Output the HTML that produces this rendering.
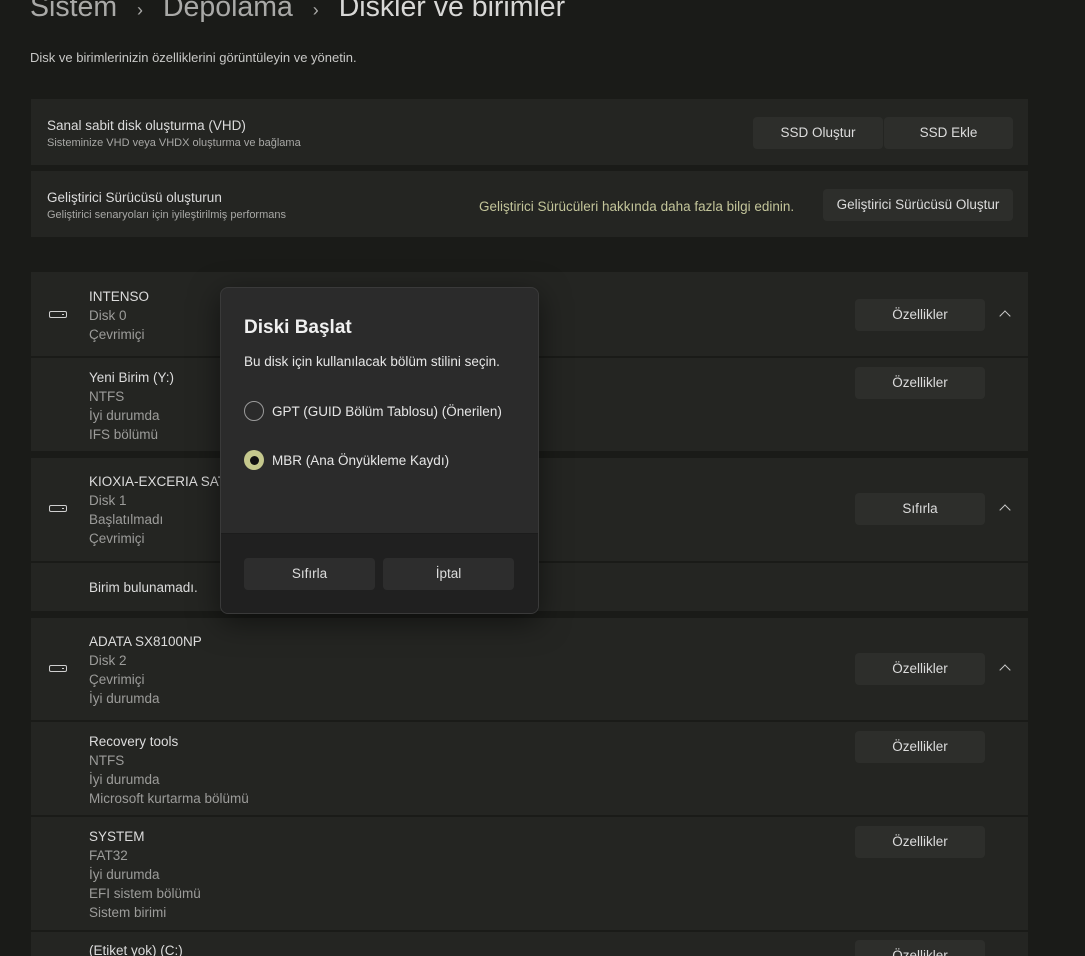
<!DOCTYPE html>
<html><head><meta charset="utf-8"><style>
*{margin:0;padding:0;box-sizing:border-box}
html,body{width:1085px;height:956px;overflow:hidden}
body{background:#1a1b18;font-family:"Liberation Sans",sans-serif;color:#dcdcdc;position:relative}
.a{position:absolute}
.card{position:absolute;left:31px;width:997px;background:#242522}
.t{position:absolute;font-size:13.5px;color:#dcdcdc;white-space:nowrap}
.s{color:#9c9c9a}
.small{font-size:11px;color:#a8a8a6}
.btn{position:absolute;background:#2d2e2b;border-radius:4px;font-size:13.5px;color:#dcdcdc;text-align:center;line-height:32px;height:32px}
.ln{line-height:19px}
.chev{position:absolute;width:8px;height:8px;border-left:1.5px solid #ccc;border-top:1.5px solid #ccc;transform:rotate(45deg)}
.ic{position:absolute;width:18px;height:7px;border:1.5px solid #cfcfcf;border-radius:2px}
.ic:after{content:"";position:absolute;right:2px;top:1.5px;width:2px;height:1.5px;background:#cfcfcf}
</style></head><body>
<div class="a" style="left:30px;top:-9px;font-size:28.5px;color:#a9a9a7;white-space:nowrap">Sistem <span style="font-size:18px;margin:0 12px">›</span> Depolama <span style="font-size:18px;margin:0 12px">›</span> <span style="color:#d8d8d6">Diskler ve birimler</span></div>
<div class="t" style="left:30px;top:50px;font-size:13px;color:#c8c8c6">Disk ve birimlerinizin özelliklerini görüntüleyin ve yönetin.</div>

<div class="card" style="top:99px;height:66px"></div>
<div class="t" style="left:47px;top:118px">Sanal sabit disk oluşturma (VHD)</div>
<div class="t small" style="left:47px;top:137px">Sisteminize VHD veya VHDX oluşturma ve bağlama</div>
<div class="btn" style="left:753px;top:117px;width:130px">SSD Oluştur</div>
<div class="btn" style="left:884px;top:117px;width:129px">SSD Ekle</div>

<div class="card" style="top:171px;height:66px"></div>
<div class="t" style="left:47px;top:190px">Geliştirici Sürücüsü oluşturun</div>
<div class="t small" style="left:47px;top:209px">Geliştirici senaryoları için iyileştirilmiş performans</div>
<div class="t" style="left:479px;top:199px;color:#c3c59a">Geliştirici Sürücüleri hakkında daha fazla bilgi edinin.</div>
<div class="btn" style="left:823px;top:189px;width:190px">Geliştirici Sürücüsü Oluştur</div>

<div class="card" style="top:272px;height:84px"></div>
<div class="card" style="top:358px;height:93px"></div>
<div class="ic" style="left:49px;top:311px"></div>
<div class="t ln" style="left:89px;top:287px">INTENSO<br><span class="s">Disk 0<br>Çevrimiçi</span></div>
<div class="btn" style="left:855px;top:299px;width:130px">Özellikler</div>
<div class="chev" style="left:1001px;top:312px"></div>
<div class="t ln" style="left:89px;top:368px">Yeni Birim (Y:)<br><span class="s">NTFS<br>İyi durumda<br>IFS bölümü</span></div>
<div class="btn" style="left:855px;top:367px;width:130px">Özellikler</div>

<div class="card" style="top:458px;height:103px"></div>
<div class="card" style="top:563px;height:48px"></div>
<div class="ic" style="left:49px;top:505px"></div>
<div class="t ln" style="left:89px;top:472px">KIOXIA-EXCERIA SATA<br><span class="s">Disk 1<br>Başlatılmadı<br>Çevrimiçi</span></div>
<div class="btn" style="left:855px;top:493px;width:130px">Sıfırla</div>
<div class="chev" style="left:1001px;top:506px"></div>
<div class="t" style="left:89px;top:580px">Birim bulunamadı.</div>

<div class="card" style="top:618px;height:102px"></div>
<div class="card" style="top:722px;height:93px"></div>
<div class="card" style="top:817px;height:113px"></div>
<div class="card" style="top:932px;height:40px"></div>
<div class="ic" style="left:49px;top:665px"></div>
<div class="t ln" style="left:89px;top:632px">ADATA SX8100NP<br><span class="s">Disk 2<br>Çevrimiçi<br>İyi durumda</span></div>
<div class="btn" style="left:855px;top:653px;width:130px">Özellikler</div>
<div class="chev" style="left:1001px;top:666px"></div>
<div class="t ln" style="left:89px;top:732px">Recovery tools<br><span class="s">NTFS<br>İyi durumda<br>Microsoft kurtarma bölümü</span></div>
<div class="btn" style="left:855px;top:731px;width:130px">Özellikler</div>
<div class="t ln" style="left:89px;top:827px">SYSTEM<br><span class="s">FAT32<br>İyi durumda<br>EFI sistem bölümü<br>Sistem birimi</span></div>
<div class="btn" style="left:855px;top:826px;width:130px">Özellikler</div>
<div class="t ln" style="left:89px;top:941px">(Etiket yok) (C:)</div>
<div class="btn" style="left:855px;top:940px;width:130px">Özellikler</div>

<div class="a" style="left:220px;top:287px;width:319px;height:327px;background:#2b2b2b;border:1px solid #3a3a3a;border-radius:8px;overflow:hidden;box-shadow:0 8px 30px rgba(0,0,0,.5)">
  <div class="a" style="left:0;top:245px;width:319px;height:82px;background:#202020;border-top:1px solid #1c1c1c"></div>
  <div class="t" style="left:23px;top:29px;font-size:19px;font-weight:bold;color:#f0f0f0">Diski Başlat</div>
  <div class="t" style="left:23px;top:66px;color:#e6e6e6">Bu disk için kullanılacak bölüm stilini seçin.</div>
  <div class="a" style="left:23px;top:113px;width:20px;height:20px;border:1.5px solid #9a9a9a;border-radius:50%"></div>
  <div class="t" style="left:51px;top:116px;color:#e6e6e6">GPT (GUID Bölüm Tablosu) (Önerilen)</div>
  <div class="a" style="left:23px;top:162px;width:20px;height:20px;border-radius:50%;background:#c5c88d"></div>
  <div class="a" style="left:28.5px;top:167.5px;width:9px;height:9px;border-radius:50%;background:#111"></div>
  <div class="t" style="left:51px;top:165px;color:#e6e6e6">MBR (Ana Önyükleme Kaydı)</div>
  <div class="btn" style="left:23px;top:270px;width:131px;background:#2d2d2d">Sıfırla</div>
  <div class="btn" style="left:162px;top:270px;width:131px;background:#2d2d2d">İptal</div>
</div>
</body></html>
